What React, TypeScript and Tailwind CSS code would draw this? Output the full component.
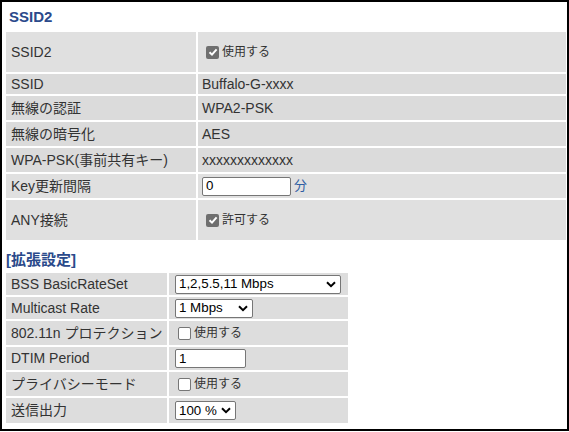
import React from "react";

const font = "font-['Liberation_Sans','Noto_Sans_CJK_JP',sans-serif]";

function CheckBox({ checked }: { checked?: boolean }) {
  if (checked) {
    return (
      <span className="ml-[4px] mr-[3px] inline-flex h-[13px] w-[13px] items-center justify-center rounded-[2px] bg-[#6f6f6f]">
        <svg width="10" height="10" viewBox="0 0 10 10">
          <path d="M1.5 5.2 L4 7.6 L8.6 2.4" fill="none" stroke="white" strokeWidth="2" />
        </svg>
      </span>
    );
  }
  return <span className="ml-[4px] mr-[3px] inline-block h-[13px] w-[13px] rounded-[2px] border border-[#767676] bg-white" />;
}

function Check({ checked, text }: { checked?: boolean; text: string }) {
  return (
    <span className="flex items-center">
      <CheckBox checked={checked} />
      <span className="text-[12px]">{text}</span>
    </span>
  );
}

function Select({ value, width }: { value: string; width: string }) {
  return (
    <div
      className={`ml-[1px] flex h-[19px] items-center justify-between rounded-[2px] border border-[#767676] bg-white pl-[3px] pr-[4px] text-[13.33px] text-black ${width}`}
    >
      <span>{value}</span>
      <svg width="10" height="7" viewBox="0 0 10 7">
        <path d="M1 1.3 L5 5.2 L9 1.3" fill="none" stroke="black" strokeWidth="2" />
      </svg>
    </div>
  );
}

function TextBox({ value, width }: { value: string; width: string }) {
  return (
    <div className={`flex h-[19px] items-center rounded-[2px] border border-[#767676] bg-white pl-[3px] text-[13.33px] text-black ${width}`}>
      {value}
    </div>
  );
}

type Row = { label: string; h: string; bg: string; value: React.ReactNode };

const basic: Row[] = [
  { label: "SSID2", h: "h-[40px]", bg: "bg-[#e0e0e0]", value: <Check checked text="使用する" /> },
  { label: "SSID", h: "h-[20px]", bg: "bg-[#dbdbdb]", value: "Buffalo-G-xxxx" },
  { label: "無線の認証", h: "h-[24px]", bg: "bg-[#dbdbdb]", value: "WPA2-PSK" },
  { label: "無線の暗号化", h: "h-[24px]", bg: "bg-[#dbdbdb]", value: "AES" },
  { label: "WPA-PSK(事前共有キー)", h: "h-[24px]", bg: "bg-[#dbdbdb]", value: "xxxxxxxxxxxxx" },
  {
    label: "Key更新間隔",
    h: "h-[24px]",
    bg: "bg-[#e0e0e0]",
    value: (
      <span className="flex items-center">
        <TextBox value="0" width="w-[89px]" />
        <span className="ml-[3px] text-[13px] text-[#2f5ea3]">分</span>
      </span>
    ),
  },
  { label: "ANY接続", h: "h-[40px]", bg: "bg-[#e0e0e0]", value: <Check checked text="許可する" /> },
];

const extended: Row[] = [
  { label: "BSS BasicRateSet", h: "h-[22px]", bg: "bg-[#dddddd]", value: <Select value="1,2,5.5,11 Mbps" width="w-[166px]" /> },
  { label: "Multicast Rate", h: "h-[22px]", bg: "bg-[#dddddd]", value: <Select value="1 Mbps" width="w-[78px]" /> },
  { label: "802.11n プロテクション", h: "h-[24px]", bg: "bg-[#dddddd]", value: <Check text="使用する" /> },
  {
    label: "DTIM Period",
    h: "h-[23px]",
    bg: "bg-[#dddddd]",
    value: (
      <span className="ml-[1px]">
        <TextBox value="1" width="w-[71px]" />
      </span>
    ),
  },
  { label: "プライバシーモード", h: "h-[24px]", bg: "bg-[#dddddd]", value: <Check text="使用する" /> },
  { label: "送信出力", h: "h-[25px]", bg: "bg-[#dddddd]", value: <Select value="100 %" width="w-[61px]" /> },
];

function Table({ rows, left, right, valuePad }: { rows: Row[]; left: string; right: string; valuePad: string }) {
  return (
    <div className="ml-[4px] flex flex-col gap-[2px]">
      {rows.map((r) => (
        <div key={r.label} className={`flex gap-[2px] ${r.h}`}>
          <div className={`flex items-center pl-[5px] ${left} ${r.bg}`}>{r.label}</div>
          <div className={`flex items-center ${valuePad} ${right} ${r.bg}`}>{r.value}</div>
        </div>
      ))}
    </div>
  );
}

export default function App() {
  return (
    <div className={`h-[431px] w-[569px] border-2 border-black bg-white text-[14px] text-[#333333] ${font}`}>
      <div className="flex h-[30px] items-center pl-[7px] text-[15px] font-bold text-[#2b4a8b]">SSID2</div>
      <Table rows={basic} left="w-[190px]" right="w-[368px]" valuePad="pl-[4px]" />
      <div className="flex h-[33px] items-end pb-[2px] pl-[4px] text-[15px] font-bold text-[#2b4a8b]">[拡張設定]</div>
      <Table rows={extended} left="w-[161px]" right="w-[179px]" valuePad="pl-[5px]" />
    </div>
  );
}
